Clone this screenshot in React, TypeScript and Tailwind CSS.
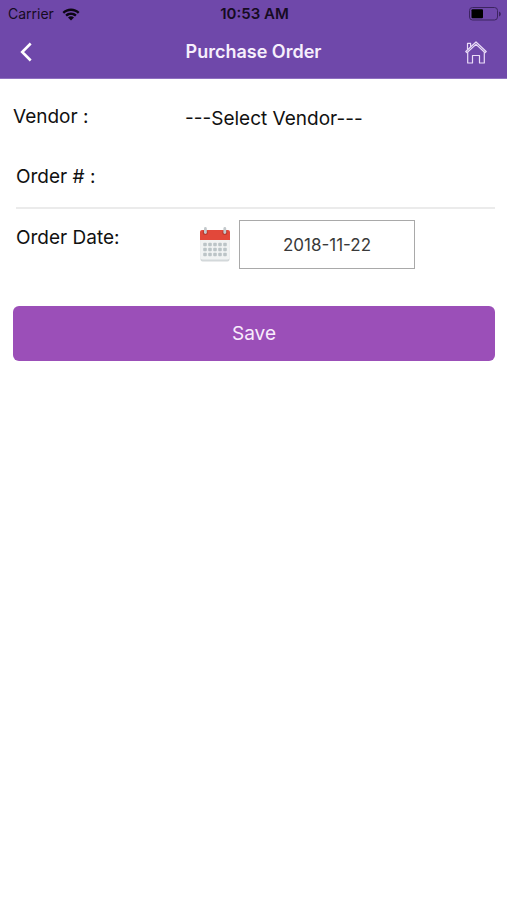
import { useState } from "react";

const WifiIcon = () => (
  <svg viewBox="0 0 18 13" className="h-[13px] w-[18px]" fill="#0d0714" aria-hidden="true">
    <path d="M9 0.6C5.700.6 2.700 1.900.5 4L2.100 5.700C3.900 4 6.300 3 9 3s5.100 1 6.900 2.700L17.500 4C15.300 1.900 12.300.6 9 .6Z" />
    <path d="M9 4.500C6.800 4.500 4.800 5.300 3.300 6.800L4.900 8.500C6 7.500 7.400 6.900 9 6.900s3 .6 4.100 1.600l1.600-1.700C13.200 5.300 11.200 4.500 9 4.500Z" />
    <path d="M9 8.300c-1.200 0-2.200.4-3 1.200L9 12.600l3-3.100c-.8-.8-1.800-1.200-3-1.200Z" />
  </svg>
);

const BatteryIcon = () => (
  <svg viewBox="0 0 32 14" className="h-[14px] w-8" aria-hidden="true">
    <rect x="0.500" y="0.500" width="28" height="12.500" rx="3" fill="none" stroke="#3c2460" />
    <rect x="2.500" y="2.200" width="11.500" height="9" rx="1" fill="#000" />
    <path d="M30 4.500c1.200.4 1.800 1.300 1.800 2.500S31.200 9.100 30 9.500Z" fill="#3c2460" />
  </svg>
);

const HomeIcon = () => (
  <svg viewBox="0 0 22 23" className="h-[23px] w-[22px]" fill="none" stroke="#eadcf8" strokeWidth="1.200" strokeLinejoin="round" aria-hidden="true">
    <path d="M0.800 10.500 11 1l10.200 9.500-1.100 1.200L11 3.400 1.900 11.700Z" />
    <path d="M2.700 11.200V22H7.500V14.500h7V22h4.800V11.200" />
    <path d="M2.500 8.600V2.400H5.600V5.800" />
  </svg>
);

const CalendarIcon = () => {
  const columns = [5, 10, 15, 20, 25];
  const rows = [17.5, 22.5, 27.5];

  return (
    <svg viewBox="0 0 30 35" className="h-[35px] w-[30px]" aria-hidden="true">
      <rect x="0.500" y="5" width="29" height="29.500" rx="2" fill="#d3d8da" />
      <rect x="0.500" y="4" width="29" height="28.500" rx="2" fill="#f1f3f3" />
      <path d="M2 3h26a2 2 0 0 1 2 2v8H0V5a2 2 0 0 1 2-2Z" fill="#e2483a" />
      {rows.map((y) =>
        columns.map((x) => (
          <rect key={`${x}-${y}`} x={x - 1.8} y={y - 1.8} width="3.600" height="3.600" rx="1" fill="#bcc4c7" />
        ))
      )}
      <circle cx="5.300" cy="5.500" r="2.500" fill="#b93a30" />
      <circle cx="24.800" cy="5.500" r="2.500" fill="#b93a30" />
      <rect x="4" y="0" width="2.800" height="7" rx="1.400" fill="#c3c9cc" />
      <rect x="23.400" y="0" width="2.800" height="7" rx="1.400" fill="#c3c9cc" />
    </svg>
  );
};

const App = () => {
  const [vendor, setVendor] = useState("");
  const [orderNumber, setOrderNumber] = useState("");
  const [orderDate, setOrderDate] = useState("2018-11-22");

  return (
    <div className="min-h-screen bg-white font-['Inter','Liberation_Sans',sans-serif] text-[#111]">
      <header className="bg-[#6f48aa]">
        {/* Status bar */}
        <div className="grid h-7 grid-cols-[1fr_auto_1fr] items-center pl-2 pr-1.5 text-sm text-[#160b22]">
          <div className="flex items-center gap-2">
            <span>Carrier</span>
            <WifiIcon />
          </div>
          <span className="text-center text-[15px] font-semibold">10:53 AM</span>
          <div className="flex justify-end">
            <BatteryIcon />
          </div>
        </div>

        {/* Title bar */}
        <div className="flex h-[51px] items-center justify-between border-b border-[#8f70c0] px-5 pb-0.5">
          <button type="button" aria-label="Back" className="flex w-6">
            <svg viewBox="0 0 12 20" className="h-5 w-3" fill="none" stroke="#fff" strokeWidth="2.600" aria-hidden="true">
              <path d="M10.700 1.500 2.200 10l8.500 8.500" />
            </svg>
          </button>
          <h1 className="text-lg font-semibold text-[#f6effc]">Purchase Order</h1>
          <button type="button" aria-label="Home" className="flex w-6 justify-end">
            <HomeIcon />
          </button>
        </div>
      </header>

      <form className="pl-[13px] pr-3 pt-2 text-[19px] leading-7" onSubmit={(e) => e.preventDefault()}>
        <div className="flex h-[60px] items-center">
          <label htmlFor="vendor" className="w-[172px] shrink-0">Vendor :</label>
          <select
            id="vendor"
            value={vendor}
            onChange={(e) => setVendor(e.target.value)}
            className="h-11 min-w-0 flex-1 appearance-none bg-transparent pt-1"
          >
            <option value="">---Select Vendor---</option>
          </select>
        </div>

        <div className="ml-[3px] flex h-[62px] items-center border-b-2 border-[#ebebeb]">
          <label htmlFor="order-number" className="w-[169px] shrink-0">Order # :</label>
          <input
            id="order-number"
            type="text"
            value={orderNumber}
            onChange={(e) => setOrderNumber(e.target.value)}
            className="h-10 min-w-0 flex-1 bg-transparent outline-none"
          />
        </div>

        <div className="ml-[3px] mt-[11px] flex items-start">
          <label htmlFor="order-date" className="w-[184px] shrink-0 pt-1">Order Date:</label>
          <div className="flex items-center gap-[9px]">
            <CalendarIcon />
            <input
              id="order-date"
              type="text"
              value={orderDate}
              onChange={(e) => setOrderDate(e.target.value)}
              className="h-[49px] w-44 border border-[#a9a9a9] text-center text-[17px] text-[#3a3a3a] outline-none"
            />
          </div>
        </div>

        <button type="submit" className="mt-[37px] h-[55px] w-full rounded-md bg-[#9b4fb8] text-[#f8ecfc]">
          Save
        </button>
      </form>
    </div>
  );
};

export default App;
